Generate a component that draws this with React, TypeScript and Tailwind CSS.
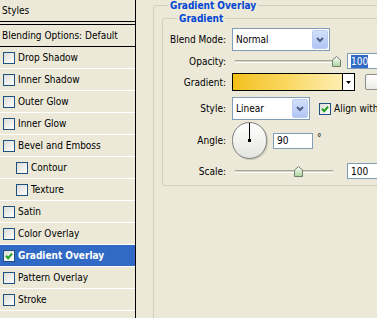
import clsx from "clsx";

const cn = clsx;

const styleRows = [
  { name: "Drop Shadow" },
  { name: "Inner Shadow" },
  { name: "Outer Glow" },
  { name: "Inner Glow" },
  { name: "Bevel and Emboss" },
  { name: "Contour", indent: true },
  { name: "Texture", indent: true },
  { name: "Satin" },
  { name: "Color Overlay" },
  { name: "Gradient Overlay", checked: true, active: true },
  { name: "Pattern Overlay" },
  { name: "Stroke" },
];

function Checkbox({ checked }: { checked?: boolean }) {
  return (
    <span className="flex h-[12px] w-[12px] shrink-0 items-center justify-center border border-[#1c5180] bg-gradient-to-br from-[#dcdcd7] to-white">
      {checked && (
        <svg width="8" height="8" viewBox="0 0 8 8">
          <path d="M1 3.8 L3.2 6.2 L7 1.6" fill="none" stroke="#21a121" strokeWidth="2" />
        </svg>
      )}
    </span>
  );
}

function Select({ value, className }: { value: string; className: string }) {
  return (
    <div className={cn("flex h-[23px] items-center border border-[#7f9db9] bg-white pl-[3px] pr-[1px]", className)}>
      <span>{value}</span>
      <span className="ml-auto flex h-[19px] w-[16px] items-center justify-center rounded-[2px] border border-[#bccbf0] bg-gradient-to-b from-[#d3e0fd] to-[#b1c5f3]">
        <svg width="8" height="6" viewBox="0 0 8 6">
          <path d="M1 1 L4 4 L7 1" fill="none" stroke="#4d6185" strokeWidth="2" />
        </svg>
      </span>
    </div>
  );
}

function Thumb() {
  return (
    <svg width="9" height="11" viewBox="0 0 9 11">
      <defs>
        <linearGradient id="th" x1="0" y1="0" x2="0" y2="1">
          <stop offset="0" stopColor="#ffffff" />
          <stop offset="1" stopColor="#a9d49a" />
        </linearGradient>
      </defs>
      <polygon points="0.5,4 4.5,0.5 8.5,4 8.5,10.5 0.5,10.5" fill="url(#th)" stroke="#6f7d6f" />
    </svg>
  );
}

function Slider({ pos }: { pos: string }) {
  return (
    <div className="relative ml-[3px] h-[3px] w-[98px] border-t border-[#a5a59a] border-b border-b-white bg-[#d8d4c4]">
      <span className={cn("absolute top-[-5px]", pos)}>
        <Thumb />
      </span>
    </div>
  );
}

function NumberBox({ value, selected }: { value: string; selected?: boolean }) {
  return (
    <div className="flex h-[16px] w-[40px] items-center border border-[#7f9db9] bg-white pl-[3px]">
      <span className={cn(selected && "bg-[#316ac5] text-white")}>{value}</span>
    </div>
  );
}

function Label({ children }: { children: string }) {
  return <span className="w-[63px] shrink-0 text-right">{children}</span>;
}

export default function App() {
  return (
    <div
      className="flex h-[318px] w-[377px] overflow-hidden bg-[#ece9d8] text-[10px] leading-[13px] text-black"
      style={{ fontFamily: '"DejaVu Sans Condensed", "Liberation Sans", sans-serif' }}
    >
      {/* Styles list */}
      <div className="flex w-[136px] shrink-0 flex-col border-r border-black">
        <div className="flex h-[21px] items-center pl-[2px]">Styles</div>
        <div className="h-[4px] border-y border-black" />
        <div className="flex h-[22px] items-center border-b border-black pl-[2px]">Blending Options: Default</div>
        {styleRows.map((row) => (
          <div
            key={row.name}
            className={cn(
              "flex h-[22px] shrink-0 items-center gap-[3px] border-b border-white",
              row.indent ? "pl-[16px]" : "pl-[3px]",
              row.active && "bg-[#316ac5] font-bold text-white"
            )}
          >
            <Checkbox checked={row.checked} />
            <span>{row.name}</span>
          </div>
        ))}
      </div>

      {/* Gradient Overlay group */}
      <div className="pl-[17px]">
        <fieldset className="h-[340px] w-[260px] rounded-[3px] border border-[#d0d0bf]">
          <legend className="ml-[14px] px-[2px] leading-[11px] font-bold text-[#0046d5]">Gradient Overlay</legend>
          <fieldset className="mt-[2px] ml-[8px] w-[240px] rounded-[3px] border border-[#d0d0bf] pb-[6px]">
            <legend className="ml-[14px] px-[2px] leading-[11px] font-bold text-[#0046d5]">Gradient</legend>

            <div className="mt-[4px] flex items-center gap-[6px]">
              <Label>Blend Mode:</Label>
              <Select value="Normal" className="w-[98px]" />
            </div>

            <div className="mt-[1px] flex h-[18px] items-center gap-[6px]">
              <Label>Opacity:</Label>
              <Slider pos="left-[97px]" />
              <span className="ml-[8px]">
                <NumberBox value="100" selected />
              </span>
            </div>

            <div className="mt-[3px] flex items-center gap-[6px]">
              <Label>Gradient:</Label>
              <div className="flex h-[18px] w-[123px] border border-black">
                <div className="flex-1 bg-gradient-to-r from-[#f3c010] via-[#fad860] to-[#fdeeb0]" />
                <div className="flex w-[12px] items-center justify-center border-l border-black bg-white">
                  <svg width="5" height="3" viewBox="0 0 5 3">
                    <polygon points="0,0 5,0 2.5,3" fill="#000" />
                  </svg>
                </div>
              </div>
              <div className="ml-[4px] h-[16px] w-[20px] rounded-[2px] border border-[#8c8c8c] bg-gradient-to-b from-white to-[#ecebe6]" />
            </div>

            <div className="mt-[6px] flex items-center gap-[6px]">
              <Label>Style:</Label>
              <Select value="Linear" className="w-[78px]" />
              <div className="ml-[3px] flex items-center gap-[3px] whitespace-nowrap">
                <Checkbox checked />
                <span>Align with</span>
              </div>
            </div>

            <div className="mt-[2px] flex items-center gap-[6px]">
              <Label>Angle:</Label>
              <div className="relative h-[37px] w-[35px] rounded-full border border-[#7c7c7c] bg-gradient-to-b from-white to-[#e4e4e0] shadow-[1px_1px_1px_rgba(0,0,0,0.15)]">
                <span className="absolute top-0 left-[16px] h-[18px] w-[1px] bg-black" />
                <span className="absolute top-[16px] left-[15px] h-[3px] w-[3px] bg-black" />
              </div>
              <div className="flex items-start gap-[4px]">
                <NumberBox value="90" />
                <span className="-mt-[2px]">°</span>
              </div>
            </div>

            <div className="mt-[4px] flex h-[16px] items-center gap-[6px]">
              <Label>Scale:</Label>
              <Slider pos="left-[59px]" />
              <span className="ml-[8px]">
                <NumberBox value="100" />
              </span>
            </div>
          </fieldset>
        </fieldset>
      </div>
    </div>
  );
}
